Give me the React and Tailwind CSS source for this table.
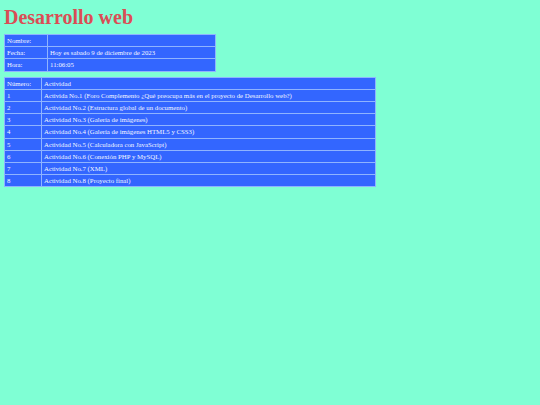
const info = [
  ['Nombre:', ''],
  ['Fecha:', 'Hoy es sabado 9 de diciembre de 2023'],
  ['Hora:', '11:06:05'],
];

const actividades = [
  ['Número:', 'Actividad'],
  ['1', 'Activida No.1 (Foro Complemento ¿Qué preocupa más en el proyecto de Desarrollo web?)'],
  ['2', 'Actividad No.2 (Estructura global de un documento)'],
  ['3', 'Actividad No.3 (Galería de imágenes)'],
  ['4', 'Actividad No.4 (Galería de imágenes HTML5 y CSS3)'],
  ['5', 'Actividad No.5 (Calculadora con JavaScript)'],
  ['6', 'Actividad No.6 (Conexión PHP y MySQL)'],
  ['7', 'Actividad No.7 (XML)'],
  ['8', 'Actividad No.8 (Proyecto final)'],
];

function Tabla({ rows, width, first }) {
  return (
    <table className="border-collapse border border-[#8fb4ff] bg-[#3366ff] text-[6.8px] leading-[11px] text-[#f4f7ff]" style={{ width }}>
      <tbody>
        {rows.map((r, i) => (
          <tr key={i} className="h-[12.2px]">
            <td className="border border-[#8fb4ff] px-[2px] align-middle" style={{ width: first }}>{r[0]}</td>
            <td className="border border-[#8fb4ff] px-[2px] align-middle whitespace-nowrap">{r[1]}</td>
          </tr>
        ))}
      </tbody>
    </table>
  );
}

export default function App() {
  return (
    <div className="min-h-[405px] bg-[#7fffd4] px-[4px] pt-[8px] font-['Liberation_Serif',serif]">
      <h1 className="text-[20px] font-bold leading-[18px] text-[#db4d55]">Desarrollo web</h1>
      <div className="mt-[8px]">
        <Tabla rows={info} width="212px" first="43px" />
      </div>
      <div className="mt-[5px]">
        <Tabla rows={actividades} width="372px" first="37px" />
      </div>
    </div>
  );
}
